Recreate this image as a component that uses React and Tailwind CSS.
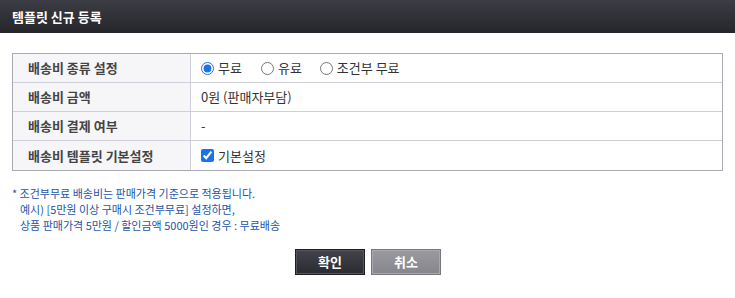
import React from "react";

const font = { fontFamily: '"Noto Sans CJK KR", "Noto Sans", sans-serif' };

function Row({ label, children, last }) {
  return (
    <div className={`flex h-[29px] ${last ? "" : "border-b border-[#cfcfda]"}`}>
      <div className="w-[178px] shrink-0 bg-[#f6f6f8] border-r border-[#cfcfda] pl-[15px] flex items-center text-[13px] font-bold text-[#444]">
        {label}
      </div>
      <div className="flex-1 pl-[10px] flex items-center text-[13px] text-[#333]">{children}</div>
    </div>
  );
}

function Radio({ checked, label, mr }) {
  return (
    <label className={`flex items-center ${mr}`}>
      <input type="radio" name="t" defaultChecked={checked} className="m-0 w-[13px] h-[13px] accent-[#1a73e8]" />
      <span className="ml-[4px]">{label}</span>
    </label>
  );
}

export default function App() {
  return (
    <div className="w-[735px] h-[298px] bg-white" style={font}>
      <div className="h-[33px] bg-gradient-to-b from-[#3d3d45] to-[#25252b] flex items-center pl-[12px] text-white font-bold text-[13px]">
        템플릿 신규 등록
      </div>
      <div className="mx-[12px] mt-[20px] w-[711px] border border-[#aaaab4]">
        <Row label="배송비 종류 설정">
          <Radio checked label="무료" mr="mr-[19px]" />
          <Radio label="유료" mr="mr-[18px]" />
          <Radio label="조건부 무료" />
        </Row>
        <Row label="배송비 금액">0원 (판매자부담)</Row>
        <Row label="배송비 결제 여부">-</Row>
        <Row label="배송비 템플릿 기본설정" last>
          <label className="flex items-center">
            <input type="checkbox" defaultChecked className="m-0 w-[13px] h-[13px] accent-[#1a73e8]" />
            <span className="ml-[4px]">기본설정</span>
          </label>
        </Row>
      </div>
      <div className="mt-[14px] ml-[12px] text-[11px] leading-[16px] text-[#1d55a8]">
        <div>* 조건부무료 배송비는 판매가격 기준으로 적용됩니다.</div>
        <div className="pl-[8px]">예시) [5만원 이상 구매시 조건부무료] 설정하면,</div>
        <div className="pl-[8px]">상품 판매가격 5만원 / 할인금액 5000원인 경우 : 무료배송</div>
      </div>
      <div className="flex justify-center gap-[6px] mt-[16px] pl-[1px]">
        <button className="w-[70px] h-[26px] border border-[#1e1e22] bg-gradient-to-b from-[#44444c] to-[#2a2a31] text-white text-[13px] font-bold shadow-[inset_0_0_0_1px_#55555d]">
          확인
        </button>
        <button className="w-[70px] h-[26px] border border-[#77777c] bg-gradient-to-b from-[#9a9aa0] to-[#85858b] text-white text-[13px] font-bold shadow-[inset_0_0_0_1px_#a8a8ae]">
          취소
        </button>
      </div>
    </div>
  );
}
